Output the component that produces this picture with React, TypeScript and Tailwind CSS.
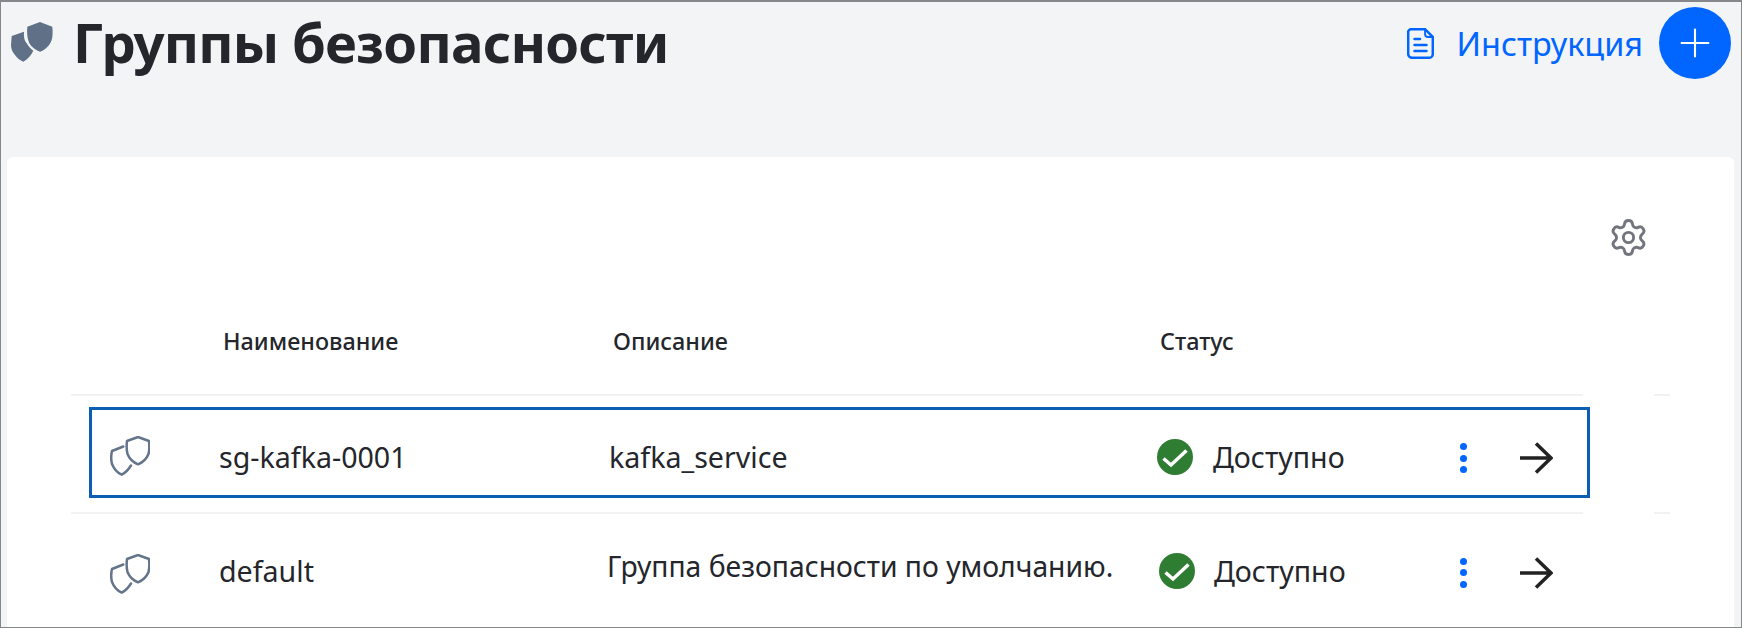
// SecurityGroupsPage: list of security groups
import { Plus, Settings } from 'lucide-react';

interface Group {
  name: string;
  description: string;
}

const GROUPS: Group[] = [
  { name: 'sg-kafka-0001', description: 'kafka_service' },
  { name: 'default', description: 'Группа безопасности по умолчанию.' },
];

const COLS = 'grid grid-cols-[149px_390px_547px_1fr]';

function ShieldsFilled() {
  return (
    <svg width="42" height="40" viewBox="0 0 42 40" className="shrink-0" fill="#5f7087">
      <path d="M0.700 14 L13 9.700 C12.500 15 13.500 19 15.700 21.300 C17.500 24.500 19.800 27 22.300 28.700 C20 33.500 16.500 37.500 12.300 39.700 C8.500 38 5.500 35.500 4 33 C1.500 30 0 27 0 23Z" />
      <path d="M29 0 L41.300 4.700 C41.800 9 41.800 14 40.700 18 C38.800 23.500 34 28 29 29.700 C24.500 28 20.500 25 18.300 21.300 C16 16 15.800 9.500 16.300 4.700Z" />
    </svg>
  );
}

function ShieldsOutline() {
  return (
    <svg width="40" height="40" viewBox="0 0 40 40" fill="none" stroke="#64748b" strokeWidth="2.500" strokeLinejoin="round" strokeLinecap="round" className="shrink-0">
      <path d="M13.300 10.500 L2 15 C1 19 1 24 2 28 C4 33 8 37 11.700 38.700 C15 37 18.500 33.500 21 29.500" />
      <path d="M28 1 L39 5 C39.500 9 39.500 14 38.500 18 C36.500 23 32.500 26.500 28 28.300 C23.500 26.500 19.500 23 17.500 18 C16.500 14 16.500 9 17 5Z" />
    </svg>
  );
}

function DocIcon() {
  return (
    <svg width="27" height="31" viewBox="0 0 27 31" fill="none" stroke="#0066ff" strokeWidth="2.500" strokeLinejoin="round" strokeLinecap="round" className="shrink-0">
      <path d="M4 1.200 H18 L25.800 9 V26 C25.800 28.200 24.200 29.800 22 29.800 H5 C2.800 29.800 1.200 28.200 1.200 26 V4 C1.200 2.500 2.500 1.200 4 1.200Z" />
      <path d="M18 1.200 V6 C18 7.800 19.200 9 21 9 H25.800" strokeWidth="1.800" />
      <path d="M7.500 11 H13 M7.500 17 H19.500 M7.500 23 H19.500" />
    </svg>
  );
}

function CheckBadge() {
  return (
    <svg width="36" height="36" viewBox="0 0 36 36" className="shrink-0">
      <circle cx="18" cy="18" r="18" fill="#2e7d32" />
      <path d="M6.500 19.500 L14 26 L29.500 11.500" fill="none" stroke="#fff" strokeWidth="3.500" />
    </svg>
  );
}

function ArrowIcon() {
  return (
    <svg width="33" height="32" viewBox="0 0 33 32" fill="none" stroke="#222222" strokeWidth="3.500" className="shrink-0">
      <path d="M0 16 H31 M16 1.500 L31 16 L16 30.500" />
    </svg>
  );
}

function MoreDots() {
  return (
    <div className="flex flex-col gap-[4.500px] shrink-0 mt-[3px]">
      <span className="w-[7px] h-[7px] rounded-full bg-[#0066ff]" />
      <span className="w-[7px] h-[7px] rounded-full bg-[#0066ff]" />
      <span className="w-[7px] h-[7px] rounded-full bg-[#0066ff]" />
    </div>
  );
}

// the divider stops under the empty action column
function DividerGap() {
  return <span className="absolute left-[1512px] -bottom-[2px] w-[71px] h-[2px] bg-white" />;
}

export default function App() {
  return (
    <div
      className="h-[628px] overflow-hidden bg-[#f3f4f6] border border-t-2 border-[#85878b] text-[#24262b]"
      style={{ fontFamily: '"Noto Sans", sans-serif' }}
    >
      <div className="h-[155px] flex items-start justify-between pl-[10px] pr-[10px]">
        <div className="flex items-start gap-[20px] pt-[20px]">
          <ShieldsFilled />
          <h1 className="text-[54.400px] leading-[56px] font-bold tracking-[-0.760px] -mt-[8px]">Группы безопасности</h1>
        </div>
        <div className="flex items-start pt-[5px]">
          <a className="flex items-center gap-[23px] text-[#0066ff] text-[32.400px] leading-[44px] mt-[14px] mr-[16px]">
            <DocIcon />
            Инструкция
          </a>
          <button className="w-[72px] h-[72px] rounded-full bg-[#0066ff] flex items-center justify-center text-white">
            <Plus size={46} strokeWidth={1.1} />
          </button>
        </div>
      </div>

      <div className="ml-[6px] mr-[7px] h-[500px] bg-white rounded-t-[6px] pt-[60px] pl-[64px]">
        <div className="flex justify-end pr-[85px] h-[40px]">
          <Settings size={41} strokeWidth={1.700} color="#72757e" />
        </div>
        <div className={`${COLS} relative h-[139px] w-[1599px] items-center pt-[32px] border-b-2 border-[#f2f2f2] text-[23.400px] font-medium`}>
          <DividerGap />
          <div />
          <div className="pl-[3px]">Наименование</div>
          <div className="pl-[3px]">Описание</div>
          <div className="pl-[3px]">Статус</div>
        </div>

        {GROUPS.map((g, i) => (
          <div
            key={g.name}
            className={`${COLS} relative w-[1599px] h-[118px] items-center border-b-2 border-[#f2f2f2] text-[28.600px] ${i === 0 ? 'pt-[6px]' : 'pb-[1px]'}`}
          >
            {i === 0 && <div className="absolute left-[18px] top-[11px] w-[1501px] h-[91px] border-[3px] border-[#0a5fb4]" />}
            <DividerGap />
            <div className={`pl-[39px] ${i === 0 ? '-mt-[3px]' : 'mt-[4px]'}`}><ShieldsOutline /></div>
            <div className="-ml-[1px]">{g.name}</div>
            <div className={i === 0 ? '-ml-[1px]' : '-ml-[3px] -mt-[10px] text-[28.300px]'}>{g.description}</div>
            <div className="flex items-center">
              <div className={`flex items-center w-[303px] ${i === 0 ? 'gap-[20px]' : 'gap-[19px] pl-[2px]'}`}>
                <CheckBadge />
                Доступно
              </div>
              <MoreDots />
              <div className="ml-[53px] mt-[3px]"><ArrowIcon /></div>
            </div>
          </div>
        ))}
      </div>
    </div>
  );
}
